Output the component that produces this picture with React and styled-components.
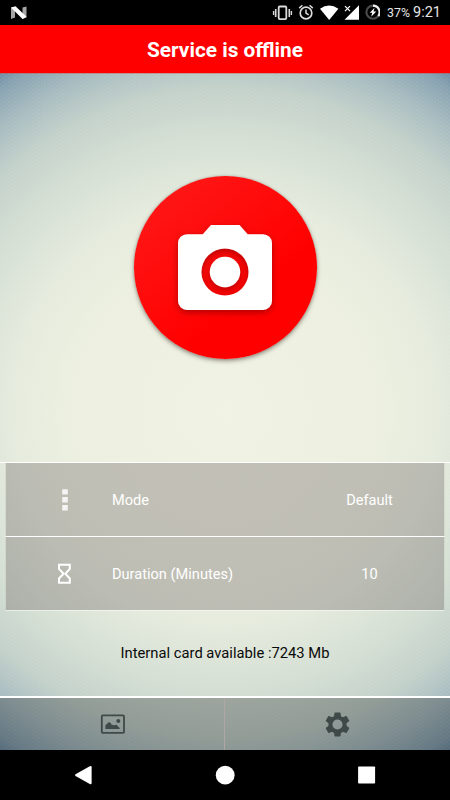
import React from "react";
import styled, { createGlobalStyle } from "styled-components";

const GlobalStyle = createGlobalStyle`
  *, *::before, *::after { box-sizing: border-box; }
  body { margin: 0; font-family: Roboto, "Noto Sans", sans-serif; }
`;

const Screen = styled.div`
  width: 450px;
  height: 800px;
  display: flex;
  flex-direction: column;
  overflow: hidden;
  background:
    radial-gradient(circle, rgba(255, 255, 255, 0.06) 0.5px, transparent 1.5px) 0 0 / 6px 4px,
    radial-gradient(circle, rgba(255, 255, 255, 0.06) 0.5px, transparent 1.5px) 3px 2px / 6px 4px,
    radial-gradient(
      circle at 225px 412px,
      #f0f2e3 0,
      #edf0e1 150px,
      #e5ebdd 215px,
      #d5dfd4 275px,
      #c3d1ca 325px,
      #a8bcc0 362px,
      #87a2b1 394px,
      #63819c 414px
    );
`;

const StatusBar = styled.div`
  height: 25px;
  flex: none;
  display: flex;
  align-items: center;
  justify-content: space-between;
  padding: 0 10px;
  background: #000;
  color: #e6e6e6;
  svg { display: block; flex: none; }
`;

const StatusGroup = styled.div`
  display: flex;
  align-items: center;
`;

const Battery = styled.span`
  margin-left: 7px;
  font-size: 12.4px;
  line-height: 25px;
  width: 26px;
  white-space: nowrap;
`;

const Clock = styled.span`
  font-size: 14.5px;
  line-height: 25px;
  width: 27px;
  white-space: nowrap;
`;

const Header = styled.header`
  height: 48px;
  flex: none;
  display: flex;
  align-items: center;
  justify-content: center;
  padding-top: 2px;
  background: #f00;
  box-shadow: 0 1px 0 rgba(220, 60, 50, 0.35);
`;

const Title = styled.h1`
  margin: 0;
  color: #fff;
  font-size: 20.8px;
  font-weight: 700;
  line-height: 24px;
`;

const Stage = styled.main`
  height: 389px;
  flex: none;
  display: flex;
  justify-content: center;
  padding-top: 103px;
`;

const ShutterButton = styled.button`
  width: 183px;
  height: 183px;
  border: 0;
  padding: 0;
  border-radius: 50%;
  background: linear-gradient(140deg, #ff1717 10%, #f00 65%);
  box-shadow: 0 2px 4px rgba(60, 50, 40, 0.5), 0 0 2px rgba(60, 50, 40, 0.25);
  svg { display: block; }
`;

const Settings = styled.section`
  flex: none;
  border-top: 1px solid #fff;
  padding: 0 5px;
`;

const SettingRow = styled.div`
  height: 74px;
  display: grid;
  grid-template-columns: 106px 1fr 149px;
  align-items: center;
  border-bottom: 1px solid ${(p) => (p.$last ? "rgba(255,255,255,.5)" : "#fff")};
  border-left: 1px solid rgba(205, 207, 194, 0.55);
  border-right: 1px solid rgba(205, 207, 194, 0.55);
  background: rgba(105, 98, 96, 0.34);
  background-clip: padding-box;
  color: #fff;
  font-size: 14.6px;
  svg { display: block; }
`;

const IconCell = styled.span`
  padding-left: 47px;
`;

const Value = styled.span`
  text-align: center;
`;

const Storage = styled.p`
  flex: 1;
  margin: 0;
  display: flex;
  align-items: center;
  justify-content: center;
  padding-bottom: 2px;
  color: #0a0a0a;
  font-size: 14.75px;
`;

const BottomTabs = styled.nav`
  height: 54px;
  flex: none;
  display: grid;
  grid-template-columns: 1fr 1fr;
  border-top: 2px solid #fff;
  background: rgba(0, 0, 0, 0.25);
  background-clip: padding-box;
`;

const Tab = styled.button`
  display: flex;
  align-items: center;
  justify-content: center;
  border: 0;
  padding: 0;
  background: none;
  ${(p) => p.$divided && "border-right: 1px solid #b0a6a5;"}
`;

const SystemNav = styled.div`
  height: 50px;
  flex: none;
  background: #000;
  svg { display: block; }
`;

const NougatIcon = () => (
  <svg width="18" height="14" viewBox="0 0 18 14">
    <path d="M1 1.5 5 1v10.5L1 13zM12.5 1.5 16.5 .5v11L12.5 13z" fill="#a5a5a5" />
    <path d="M1 1.6 5.5.3 16.5 10.8 12.5 13z" fill="#fff" />
  </svg>
);

const StatusIcons = () => (
  <svg width="108" height="18" viewBox="272 4 108 18">
    <g fill="none" stroke="#dcdcdc">
      <rect x="278.7" y="6.5" width="7.6" height="12.6" rx="1" strokeWidth="1.8" />
      <path d="M275.7 9v8M289.3 9v8" strokeWidth="1.6" />
      <path d="M273.6 11v4M291.4 11v4" strokeWidth="1.4" />
      <circle cx="306" cy="13" r="5.8" strokeWidth="1.7" />
      <path d="M306 9.5V13l2.7 1.9M299.2 8.1l3.2-2.8M312.8 8.1l-3.2-2.8" strokeWidth="1.5" />
    </g>
    <path d="M320 8.8Q329 2.2 338.4 8.8L329.2 20z" fill="#fff" />
    <path d="M359 5.2V19.7H344.5z" fill="#fff" />
    <path d="M345 6.2 350 11.2M350 6.2 345 11.2" stroke="#fff" strokeWidth="1.2" />
    <circle cx="373" cy="12.2" r="6.6" fill="none" stroke="#4a4a4a" strokeWidth="2.1" />
    <path d="M373 5.6a6.6 6.6 0 0 1 5.3 10.5" fill="none" stroke="#eee" strokeWidth="2.1" />
    <path d="M374.6 7.8 369.8 12.8h2.5l-1.2 4 5.2-5.4h-2.8z" fill="#fff" />
  </svg>
);

const CameraIcon = () => (
  <svg width="183" height="183" viewBox="134 176 183 183">
    <defs>
      <filter id="lift" x="-20%" y="-20%" width="140%" height="150%">
        <feDropShadow dx="0" dy="2.5" stdDeviation="3" floodColor="#700000" floodOpacity=".55" />
      </filter>
    </defs>
    <g fill="#fff" filter="url(#lift)">
      <path
        fillRule="evenodd"
        d="M211 225H239.5L247.7 234.2H263a9 9 0 0 1 9 9V301a9 9 0 0 1-9 9H187a9 9 0 0 1-9-9V243.2a9 9 0 0 1 9-9H202.8zM225 248.4a23.6 23.6 0 1 0 0 47.2 23.6 23.6 0 0 0 0-47.2z"
      />
      <circle cx="225" cy="272" r="15.2" />
    </g>
  </svg>
);

const DotsIcon = () => (
  <svg width="24" height="24" viewBox="0 0 24 24" fill="#f4f4f2">
    <rect x="9.2" y="1.2" width="5.6" height="5.4" rx=".5" />
    <rect x="9.2" y="9.1" width="5.6" height="5.4" rx=".5" />
    <rect x="9.2" y="17" width="5.6" height="5.4" rx=".5" />
  </svg>
);

const HourglassIcon = () => (
  <svg width="24" height="24" viewBox="0 0 24 24" fill="none" stroke="#fff" strokeWidth="2">
    <path d="M6 2.7H16.8v4.2L12.3 11.7l4.5 4.8v4.2H6v-4.2L10.6 11.7 6 6.9z" />
  </svg>
);

const GalleryIcon = () => (
  <svg width="26" height="26" viewBox="0 0 26 26">
    <rect x="2.8" y="4.4" width="22.2" height="17.4" rx="1" fill="none" stroke="#3f4948" strokeWidth="1.8" />
    <path
      d="M6.4 17.9v-3.1q0-1.8 1.8-1.8.4-1.8 1.7-1.8 2.2 0 2.9 3 .9-.8 2.1.2 3-2 4.3 1.3 1.4.4 1.7 2.2z"
      fill="#3f4948"
    />
    <circle cx="19.3" cy="10" r="2" fill="#3f4948" />
  </svg>
);

const GearIcon = () => (
  <svg width="29" height="29" viewBox="0 0 24 24" fill="#3f4948">
    <path d="M19.43 12.98c.04-.32.07-.64.07-.98s-.03-.66-.07-.98l2.11-1.65c.19-.15.24-.42.12-.64l-2-3.46c-.12-.22-.39-.3-.61-.22l-2.49 1c-.52-.4-1.08-.73-1.69-.98l-.38-2.65A.49.49 0 0 0 14 2h-4c-.25 0-.46.18-.49.42l-.38 2.65c-.61.25-1.17.59-1.69.98l-2.49-1c-.23-.09-.49 0-.61.22l-2 3.46c-.13.22-.07.49.12.64l2.11 1.65c-.04.32-.07.65-.07.98s.03.66.07.98l-2.11 1.65c-.19.15-.24.42-.12.64l2 3.46c.12.22.39.3.61.22l2.49-1c.52.4 1.08.73 1.69.98l.38 2.65c.03.24.24.42.49.42h4c.25 0 .46-.18.49-.42l.38-2.65c.61-.25 1.17-.59 1.69-.98l2.49 1c.23.09.49 0 .61-.22l2-3.46c.12-.22.07-.49-.12-.64l-2.11-1.65zM12 16.2a4.2 4.2 0 1 1 0-8.4 4.2 4.2 0 0 1 0 8.4z" />
  </svg>
);

const NavIcons = () => (
  <svg width="450" height="50" viewBox="0 750 450 50" fill="#fff">
    <path d="M75.5 774.2 89.8 766.2q1.8-.8 1.8 1V783q0 1.8-1.8 1L75.5 775.9q-1-.8 0-1.7z" />
    <circle cx="225.2" cy="775.2" r="9.4" />
    <rect x="358.1" y="766.5" width="17" height="17" rx=".8" />
  </svg>
);

export default function App() {
  return (
    <>
      <GlobalStyle />
      <Screen>
        <StatusBar>
          <NougatIcon />
          <StatusGroup>
            <StatusIcons />
            <Battery>37%</Battery>
            <Clock>9:21</Clock>
          </StatusGroup>
        </StatusBar>
        <Header>
          <Title>Service is offline</Title>
        </Header>
        <Stage>
          <ShutterButton aria-label="Start service">
            <CameraIcon />
          </ShutterButton>
        </Stage>
        <Settings>
          <SettingRow>
            <IconCell><DotsIcon /></IconCell>
            <span>Mode</span>
            <Value>Default</Value>
          </SettingRow>
          <SettingRow $last>
            <IconCell><HourglassIcon /></IconCell>
            <span>Duration (Minutes)</span>
            <Value>10</Value>
          </SettingRow>
        </Settings>
        <Storage>Internal card available :7243 Mb</Storage>
        <BottomTabs>
          <Tab $divided aria-label="Gallery"><GalleryIcon /></Tab>
          <Tab aria-label="Settings"><GearIcon /></Tab>
        </BottomTabs>
        <SystemNav><NavIcons /></SystemNav>
      </Screen>
    </>
  );
}
